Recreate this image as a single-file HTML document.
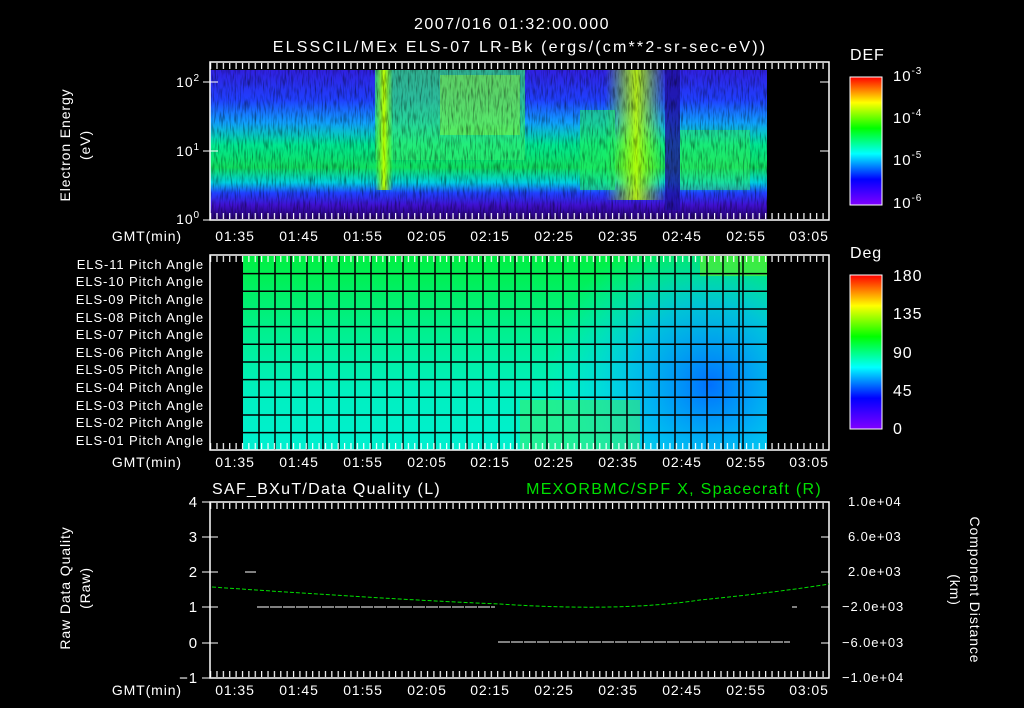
<!DOCTYPE html>
<html><head><meta charset="utf-8"><style>
html,body{margin:0;padding:0;background:#000;}
svg{display:block;font-family:"Liberation Sans",sans-serif;}
text{fill:#fff;font-size:13px;letter-spacing:0.9px;}
</style></head><body>
<svg width="1024" height="708" viewBox="0 0 1024 708">
<defs>
<pattern id="tk" x="210" y="0" width="6.38" height="708" patternUnits="userSpaceOnUse"><rect x="0" y="0" width="1.2" height="708" fill="#fff"/></pattern>
<linearGradient id="cb1" x1="0" y1="1" x2="0" y2="0">
<stop offset="0" stop-color="#8000ff"/><stop offset="0.2" stop-color="#0000ff"/><stop offset="0.4" stop-color="#00ffff"/><stop offset="0.6" stop-color="#00ff00"/><stop offset="0.8" stop-color="#ffff00"/><stop offset="1" stop-color="#ff0000"/></linearGradient>
<linearGradient id="sp" x1="0" y1="0" x2="0" y2="1">
<stop offset="0" stop-color="#3020e0"/><stop offset="0.2" stop-color="#2040ff"/><stop offset="0.35" stop-color="#10a0ff"/><stop offset="0.5" stop-color="#00e890"/><stop offset="0.65" stop-color="#10e060"/><stop offset="0.75" stop-color="#00d0e0"/><stop offset="0.82" stop-color="#2040ff"/><stop offset="0.9" stop-color="#4010d0"/><stop offset="1" stop-color="#200060"/></linearGradient>
<linearGradient id="pa" x1="0" y1="0" x2="0" y2="1">
<stop offset="0" stop-color="#00f040"/><stop offset="0.4" stop-color="#00f090"/><stop offset="0.7" stop-color="#00f0c0"/><stop offset="1" stop-color="#00f0d0"/></linearGradient>
<radialGradient id="blue" cx="710" cy="385" r="160" gradientUnits="userSpaceOnUse">
<stop offset="0" stop-color="#0070ff"/><stop offset="0.5" stop-color="#00b0ff" stop-opacity="0.7"/><stop offset="1" stop-color="#00e0ff" stop-opacity="0"/></radialGradient>
<filter id="nz"><feTurbulence type="fractalNoise" baseFrequency="0.6 0.08" numOctaves="2" seed="3"/><feColorMatrix values="0 0 0 0 0  0 0 0 0 0  0 0 0 0 0  0 0 0 -2.2 1.2"/></filter>
<linearGradient id="yel" x1="0" y1="0" x2="1" y2="0"><stop offset="0" stop-color="#80ff00" stop-opacity="0"/><stop offset="0.5" stop-color="#c0ff00"/><stop offset="1" stop-color="#80ff00" stop-opacity="0"/></linearGradient>
</defs>

<text x="512" y="29" text-anchor="middle" style="font-size:16px;letter-spacing:1.5px">2007/016 01:32:00.000</text>
<text x="520" y="52" text-anchor="middle" style="font-size:16px;letter-spacing:2.2px">ELSSCIL/MEx ELS-07 LR-Bk  (ergs/(cm**2-sr-sec-eV))</text>

<!-- panel 1 -->
<rect x="210" y="70" width="557" height="150" fill="url(#sp)"/>
<rect x="375" y="70" width="150" height="90" fill="#30f070" opacity="0.7"/>
<rect x="440" y="75" width="80" height="60" fill="#a0ff20" opacity="0.4"/>
<rect x="375" y="70" width="18" height="120" fill="url(#yel)"/>
<rect x="605" y="70" width="62" height="130" fill="url(#yel)" opacity="0.9"/>
<rect x="580" y="110" width="35" height="80" fill="#20f060" opacity="0.6"/>
<rect x="680" y="130" width="70" height="60" fill="#30f060" opacity="0.5"/>
<rect x="665" y="70" width="15" height="140" fill="#2010a0" opacity="0.8"/>
<rect x="210" y="70" width="557" height="150" filter="url(#nz)" opacity="0.5"/>
<rect x="210" y="62" width="619" height="158" fill="none" stroke="#fff" stroke-width="1.5"/>
<rect x="210" y="63" width="619" height="6" fill="url(#tk)"/>
<rect x="210" y="213" width="619" height="6" fill="url(#tk)"/>
<g stroke="#fff"><line x1="203" y1="82" x2="218" y2="82"/><line x1="203" y1="151" x2="218" y2="151"/><line x1="203" y1="220" x2="218" y2="220"/>
<line x1="829" y1="82" x2="820" y2="82"/><line x1="829" y1="151" x2="820" y2="151"/></g>
<text x="200" y="87" text-anchor="end" style="font-size:14px">10<tspan dy="-6" style="font-size:10px">2</tspan></text>
<text x="200" y="156" text-anchor="end" style="font-size:14px">10<tspan dy="-6" style="font-size:10px">1</tspan></text>
<text x="200" y="224" text-anchor="end" style="font-size:14px">10<tspan dy="-6" style="font-size:10px">0</tspan></text>
<text transform="translate(70,145) rotate(-90)" text-anchor="middle" style="font-size:14px">Electron Energy</text>
<text transform="translate(90,145) rotate(-90)" text-anchor="middle" style="font-size:14px">(eV)</text>
<text x="850" y="60" style="font-size:16px">DEF</text>
<rect x="850" y="77" width="32" height="128" fill="url(#cb1)" stroke="#fff"/>
<text x="893" y="81" style="font-size:15px">10<tspan dy="-7" style="font-size:10px">-3</tspan></text>
<text x="893" y="123" style="font-size:15px">10<tspan dy="-7" style="font-size:10px">-4</tspan></text>
<text x="893" y="165" style="font-size:15px">10<tspan dy="-7" style="font-size:10px">-5</tspan></text>
<text x="893" y="208" style="font-size:15px">10<tspan dy="-7" style="font-size:10px">-6</tspan></text>

<g id="tl">
<text x="182" y="241" text-anchor="end" style="font-size:14px">GMT(min)</text>
<g style="font-size:14px">
<text x="235" y="241" text-anchor="middle" style="font-size:14px">01:35</text><text x="299" y="241" text-anchor="middle" style="font-size:14px">01:45</text><text x="363" y="241" text-anchor="middle" style="font-size:14px">01:55</text><text x="427" y="241" text-anchor="middle" style="font-size:14px">02:05</text><text x="490" y="241" text-anchor="middle" style="font-size:14px">02:15</text><text x="554" y="241" text-anchor="middle" style="font-size:14px">02:25</text><text x="618" y="241" text-anchor="middle" style="font-size:14px">02:35</text><text x="682" y="241" text-anchor="middle" style="font-size:14px">02:45</text><text x="746" y="241" text-anchor="middle" style="font-size:14px">02:55</text><text x="809" y="241" text-anchor="middle" style="font-size:14px">03:05</text>
</g></g>

<!-- panel 2 -->
<rect x="243" y="256" width="524" height="194" fill="url(#pa)"/>
<rect x="243" y="256" width="524" height="194" fill="url(#blue)"/>
<rect x="520" y="400" width="120" height="50" fill="#40f060" opacity="0.5"/>
<rect x="700" y="256" width="67" height="20" fill="#60f020" opacity="0.6"/>
<g stroke="#000" stroke-width="1.5">
<path d="M243 273.6H767M243 291.3H767M243 309H767M243 326.6H767M243 344.3H767M243 362H767M243 379.6H767M243 397.3H767M243 415H767M243 432.6H767"/>
<path d="M259 256V450M275 256V450M291 256V450M307 256V450M323 256V450M339 256V450M355 256V450M371 256V450M387 256V450M403 256V450M419 256V450M435 256V450M451 256V450M467 256V450M483 256V450M499 256V450M515 256V450M531 256V450M547 256V450M563 256V450M579 256V450M595 256V450M611 256V450M627 256V450M643 256V450M659 256V450M675 256V450M691 256V450M707 256V450M723 256V450M739 256V450M743 256V450"/>
</g>
<rect x="210" y="255" width="619" height="195" fill="none" stroke="#fff" stroke-width="1.5"/>
<rect x="210" y="256" width="619" height="6" fill="url(#tk)"/>
<rect x="210" y="443" width="619" height="6" fill="url(#tk)"/>
<g text-anchor="end">
<text x="204" y="269">ELS-11 Pitch Angle</text><text x="204" y="286">ELS-10 Pitch Angle</text><text x="204" y="304">ELS-09 Pitch Angle</text><text x="204" y="322">ELS-08 Pitch Angle</text><text x="204" y="339">ELS-07 Pitch Angle</text><text x="204" y="357">ELS-06 Pitch Angle</text><text x="204" y="374">ELS-05 Pitch Angle</text><text x="204" y="392">ELS-04 Pitch Angle</text><text x="204" y="410">ELS-03 Pitch Angle</text><text x="204" y="427">ELS-02 Pitch Angle</text><text x="204" y="445">ELS-01 Pitch Angle</text>
</g>
<text x="850" y="258" style="font-size:16px">Deg</text>
<rect x="850" y="275" width="32" height="154" fill="url(#cb1)" stroke="#fff"/>
<text x="893" y="281" style="font-size:16px">180</text><text x="893" y="319" style="font-size:16px">135</text><text x="893" y="358" style="font-size:16px">90</text><text x="893" y="396" style="font-size:16px">45</text><text x="893" y="434" style="font-size:16px">0</text>
<use href="#tl" y="226"/>

<!-- panel 3 -->
<text x="212" y="494" style="font-size:16px;letter-spacing:1.3px">SAF_BXuT/Data Quality (L)</text>
<text x="822" y="494" text-anchor="end" style="font-size:16px;letter-spacing:1.3px;fill:#00e000">MEXORBMC/SPF X, Spacecraft (R)</text>
<rect x="210" y="502" width="619" height="176" fill="none" stroke="#fff" stroke-width="1.5"/>
<rect x="210" y="503" width="619" height="6" fill="url(#tk)"/>
<rect x="210" y="671" width="619" height="6" fill="url(#tk)"/>
<g stroke="#fff"><path d="M202 502H218M202 537H218M202 572H218M202 607H218M202 643H218M202 678H218M829 502H821M829 537H821M829 572H821M829 607H821M829 643H821M829 678H821"/></g>
<g text-anchor="end"><text x="198" y="507" style="font-size:15px">4</text><text x="198" y="542" style="font-size:15px">3</text><text x="198" y="577" style="font-size:15px">2</text><text x="198" y="612" style="font-size:15px">1</text><text x="198" y="648" style="font-size:15px">0</text><text x="198" y="683" style="font-size:15px">−1</text></g>
<g><text x="848" y="506">1.0e+04</text><text x="848" y="541">6.0e+03</text><text x="848" y="576">2.0e+03</text><text x="842" y="611">−2.0e+03</text><text x="842" y="647">−6.0e+03</text><text x="842" y="682">−1.0e+04</text></g>
<text transform="translate(70,588) rotate(-90)" text-anchor="middle" style="font-size:14px">Raw Data Quality</text>
<text transform="translate(90,588) rotate(-90)" text-anchor="middle" style="font-size:14px">(Raw)</text>
<text transform="translate(970,590) rotate(90)" text-anchor="middle" style="font-size:14px">Component Distance</text>
<text transform="translate(950,590) rotate(90)" text-anchor="middle" style="font-size:14px">(km)</text>
<path d="M212 587 Q400 600 500 604 Q620 612 700 600 Q780 592 829 584" fill="none" stroke="#00e000" stroke-dasharray="4 2"/>
<g stroke="#fff" fill="none" stroke-dasharray="12 1">
<path d="M245 572H256M257 607H495M498 642H790M792 607H797"/></g>
<use href="#tl" y="454"/>
</svg>
</body></html>
